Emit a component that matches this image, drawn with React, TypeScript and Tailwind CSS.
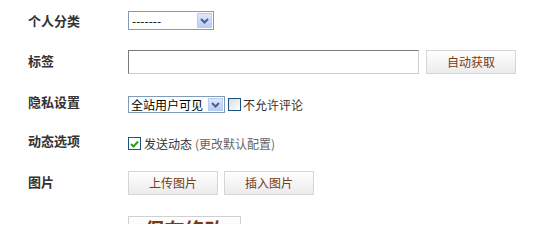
import React from "react";

const font = { fontFamily: '"Noto Sans CJK SC", "Noto Sans", sans-serif' };

function Arrow({ h }: { h: number }) {
  return (
    <div
      className="flex items-center justify-center border border-[#b8cbf1] bg-gradient-to-b from-[#dfe8fd] to-[#b9cdf6]"
      style={{ width: 15, height: h }}
    >
      <svg width="9" height="6" viewBox="0 0 9 6">
        <path d="M1 1 L4.5 4.5 L8 1" stroke="#4d6185" strokeWidth="2" fill="none" />
      </svg>
    </div>
  );
}

function Btn({ children, w = 90 }: { children: React.ReactNode; w?: number }) {
  return (
    <div
      className="flex h-[24px] items-center justify-center border border-[#d6d6d6] bg-gradient-to-b from-white to-[#ebebeb] text-[12px] text-[#7a3a17]"
      style={{ width: w }}
    >
      {children}
    </div>
  );
}

function Label({ children, className = "" }: { children: React.ReactNode; className?: string }) {
  return <div className={"w-[100px] shrink-0 text-[13px] font-bold text-[#333] " + className}>{children}</div>;
}

export default function App() {
  return (
    <div className="h-[224px] w-[555px] overflow-hidden bg-white pl-[28px]" style={font}>
      <div className="flex h-[19px] items-center mt-[11px]">
        <Label>个人分类</Label>
        <div className="flex h-[19px] w-[86px] items-center justify-between border border-[#7f9db9] bg-white pl-[3px] pr-[1px]">
          <span className="text-[12px] leading-none text-black">-------</span>
          <Arrow h={15} />
        </div>
      </div>

      <div className="flex h-[24px] items-center mt-[20px]">
        <Label className="-mt-[2px]">标签</Label>
        <div className="h-[24px] w-[291px] border border-t-[#7a7a7a] border-l-[#7a7a7a] border-r-[#d0d0d0] border-b-[#d0d0d0] bg-white" />
        <div className="ml-[7px]">
          <Btn>自动获取</Btn>
        </div>
      </div>

      <div className="flex h-[17px] items-center mt-[22px]">
        <Label className="-mt-[5px]">隐私设置</Label>
        <div className="flex h-[17px] w-[97px] items-center justify-between border border-[#7f9db9] bg-white pl-[2px] pr-[1px]">
          <span className="text-[12px] leading-none text-black">全站用户可见</span>
          <Arrow h={13} />
        </div>
        <div className="ml-[3px] h-[13px] w-[13px] border border-[#1c5180] bg-gradient-to-br from-[#dcdcd7] to-white" />
        <span className="ml-[2px] text-[12px] leading-none text-[#333]">不允许评论</span>
      </div>

      <div className="flex h-[13px] items-center mt-[24px]">
        <Label className="-mt-[5px]">动态选项</Label>
        <div className="flex h-[13px] w-[13px] items-center justify-center border border-[#1c5180] bg-white">
          <svg width="9" height="8" viewBox="0 0 9 8">
            <path d="M1 4 L3.5 6.5 L8 1.5" stroke="#21a121" strokeWidth="2" fill="none" />
          </svg>
        </div>
        <span className="ml-[3px] text-[12px] leading-none text-[#333]">发送动态</span>
        <span className="ml-[3px] text-[12px] leading-none text-[#666]">(更改默认配置)</span>
      </div>

      <div className="flex h-[24px] items-center mt-[21px]">
        <Label className="-mt-[2px]">图片</Label>
        <Btn>上传图片</Btn>
        <div className="ml-[6px]">
          <Btn>插入图片</Btn>
        </div>
      </div>

      <div className="flex mt-[21px]">
        <div className="w-[100px] shrink-0" />
        <div className="flex h-[30px] w-[113px] items-start justify-center border border-[#d0d0d0] bg-gradient-to-b from-white to-[#ebebeb] pt-[3px] text-[20px] font-bold leading-none text-[#7a3a17]">
          保存修改
        </div>
      </div>
    </div>
  );
}
